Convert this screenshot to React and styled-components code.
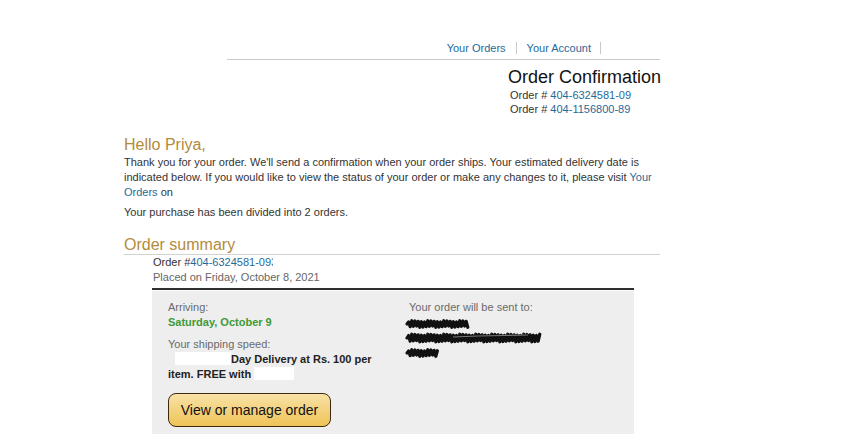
import React from 'react';
import styled, { createGlobalStyle } from 'styled-components';

const GlobalStyle = createGlobalStyle`
  html, body {
    margin: 0;
    padding: 0;
    background: #ffffff;
  }
  body {
    font-family: "Liberation Sans", Arial, sans-serif;
    color: #333333;
  }
`;

const Page = styled.div`
  width: 536px;
  margin-left: 124px;
  padding-top: 41px;
`;

const Header = styled.div`
  display: flex;
`;

const LogoSlot = styled.div`
  width: 103px;
  flex-shrink: 0;
`;

const NavBar = styled.div`
  flex: 1;
  display: flex;
  justify-content: flex-end;
  align-items: center;
  padding-bottom: 4px;
  border-bottom: 1px solid #c9c9c9;
  font-size: 11px;
  line-height: 14px;
`;

const NavLink = styled.a`
  color: #1f6a9a;
  text-decoration: none;
`;

const Sep = styled.span`
  width: 1px;
  height: 12px;
  background: #c8c8c8;
  margin: 0 ${(p) => p.$gap || 8}px;
`;

const NavBlank = styled.span`
  width: 50px;
`;

const Confirm = styled.div`
  margin-left: auto;
  width: 152px;
  margin-top: 6px;
`;

const ConfirmTitle = styled.h1`
  margin: 0;
  font-size: 18px;
  line-height: 22px;
  font-weight: normal;
  color: #111111;
  white-space: nowrap;
`;

const OrderLine = styled.div`
  width: 121px;
  font-size: 11px;
  line-height: 14px;
  padding-left: 2px;
  color: #333333;
  white-space: nowrap;
  overflow: hidden;
`;

const Link = styled.span`
  color: #1f6a9a;
`;

const Greeting = styled.h2`
  margin: 19px 0 0;
  font-size: 16px;
  line-height: 20px;
  font-weight: normal;
  color: #b38b3c;
`;

const Para = styled.p`
  margin: ${(p) => p.$top || 0}px 0 0;
  font-size: 11px;
  line-height: 15px;
  color: #333333;
`;

const SectionTitle = styled.h2`
  margin: 15px 0 0;
  font-size: 16px;
  line-height: 19px;
  font-weight: normal;
  color: #b38b3c;
  border-bottom: 1px solid #d2d2d2;
`;

const Summary = styled.div`
  margin-left: 28px;
  margin-right: 26px;
`;

const Meta = styled.div`
  font-size: 11px;
  line-height: 15px;
  padding-left: 1px;
  color: ${(p) => (p.$muted ? '#666666' : '#333333')};
  white-space: nowrap;
  overflow: hidden;
  width: ${(p) => (p.$muted ? 'auto' : '120px')};
`;

const Rule = styled.div`
  margin-top: 3px;
  height: 2px;
  background: #2e2e2e;
  border-bottom: 1px solid #fafafa;
`;

const Box = styled.div`
  background: #eeeeee;
  display: grid;
  grid-template-columns: 241px 1fr;
  padding: 9px 0 7px 16px;
`;

const Col = styled.div`
  display: flex;
  flex-direction: column;
`;

const Label = styled.div`
  font-size: 11px;
  line-height: 15px;
  color: #6a6a6a;
  margin-top: ${(p) => p.$top || 0}px;
`;

const Arrival = styled.div`
  font-size: 11px;
  line-height: 15px;
  font-weight: bold;
  color: #3f9a36;
`;

const Speed = styled.div`
  font-size: 11px;
  line-height: 15px;
  font-weight: bold;
  color: #222222;
  width: 215px;
`;

const Blank = styled.span`
  display: inline-block;
  vertical-align: -2px;
  height: 13px;
  width: ${(p) => p.$w}px;
  margin-left: ${(p) => p.$ml || 0}px;
  background: #ffffff;
`;

const Button = styled.button`
  margin-top: 11px;
  width: 163px;
  height: 34px;
  padding: 0;
  border: 1px solid #3b2a0c;
  border-radius: 8px;
  background: linear-gradient(#f8e2a6, #efc357);
  font-family: "Liberation Sans", Arial, sans-serif;
  font-size: 14px;
  color: #111111;
  cursor: pointer;
`;

const Scribble = styled.svg`
  display: block;
  margin-left: -6px;
  margin-top: 1px;
`;

// dense zigzag that looks like text scratched out with a marker
const zigzag = (x0, x1, y, h) => {
  let d = `M${x0} ${y}`;
  let up = true;
  let i = 0;
  for (let x = x0 + 1.6; x <= x1; x += 1.6) {
    const jitter = ((i * 7) % 5) / 3;
    d += ` L${x.toFixed(1)} ${(up ? y - h / 2 - jitter : y + h / 2 + jitter).toFixed(1)}`;
    up = !up;
    i += 1;
  }
  return d;
};

const redactions = [
  { x0: 4, x1: 65, y: 8, h: 4 },
  { x0: 4, x1: 137, y: 22, h: 5 },
  { x0: 4, x1: 36, y: 37, h: 4 },
];

const App = () => {
  return (
    <>
      <GlobalStyle />
      <Page>
        <Header>
          <LogoSlot />
          <NavBar>
            <NavLink href="#">Your Orders</NavLink>
            <Sep $gap={10} />
            <NavLink href="#">Your Account</NavLink>
            <Sep $gap={9} />
            <NavBlank />
          </NavBar>
        </Header>

        <Confirm>
          <ConfirmTitle>Order Confirmation</ConfirmTitle>
          <OrderLine>
            Order # <Link>404-6324581-09</Link>
          </OrderLine>
          <OrderLine>
            Order # <Link>404-1156800-89</Link>
          </OrderLine>
        </Confirm>

        <Greeting>Hello Priya,</Greeting>
        <Para>
          Thank you for your order. We'll send a confirmation when your order ships. Your
          estimated delivery date is indicated below. If you would like to view the status of
          your order or make any changes to it, please visit <Link>Your Orders</Link> on
        </Para>
        <Para $top={5}>Your purchase has been divided into 2 orders.</Para>

        <SectionTitle>Order summary</SectionTitle>
        <Summary>
          <Meta>
            Order #<Link>404-6324581-093</Link>
          </Meta>
          <Meta $muted>Placed on Friday, October 8, 2021</Meta>
          <Rule />
          <Box>
            <Col>
              <Label>Arriving:</Label>
              <Arrival>Saturday, October 9</Arrival>
              <Label $top={7}>Your shipping speed:</Label>
              <Speed>
                <Blank $w={56} $ml={7} />
                Day Delivery at Rs. 100 per item. FREE with <Blank $w={40} />
              </Speed>
              <div>
                <Button>View or manage order</Button>
              </div>
            </Col>
            <Col>
              <Label>Your order will be sent to:</Label>
              <Scribble width="145" height="44" viewBox="0 0 145 44">
                <g fill="none" stroke="#111" strokeWidth="3.2" strokeLinejoin="round" strokeLinecap="round">
                  {redactions.map((r, i) => (
                    <path key={i} d={zigzag(r.x0, r.x1, r.y, r.h)} />
                  ))}
                </g>
                <path d="M50 21 L75 20 L100 19.5 L125 19" stroke="#777" strokeWidth="1.2" fill="none" />
              </Scribble>
            </Col>
          </Box>
        </Summary>
      </Page>
    </>
  );
};

export default App;
